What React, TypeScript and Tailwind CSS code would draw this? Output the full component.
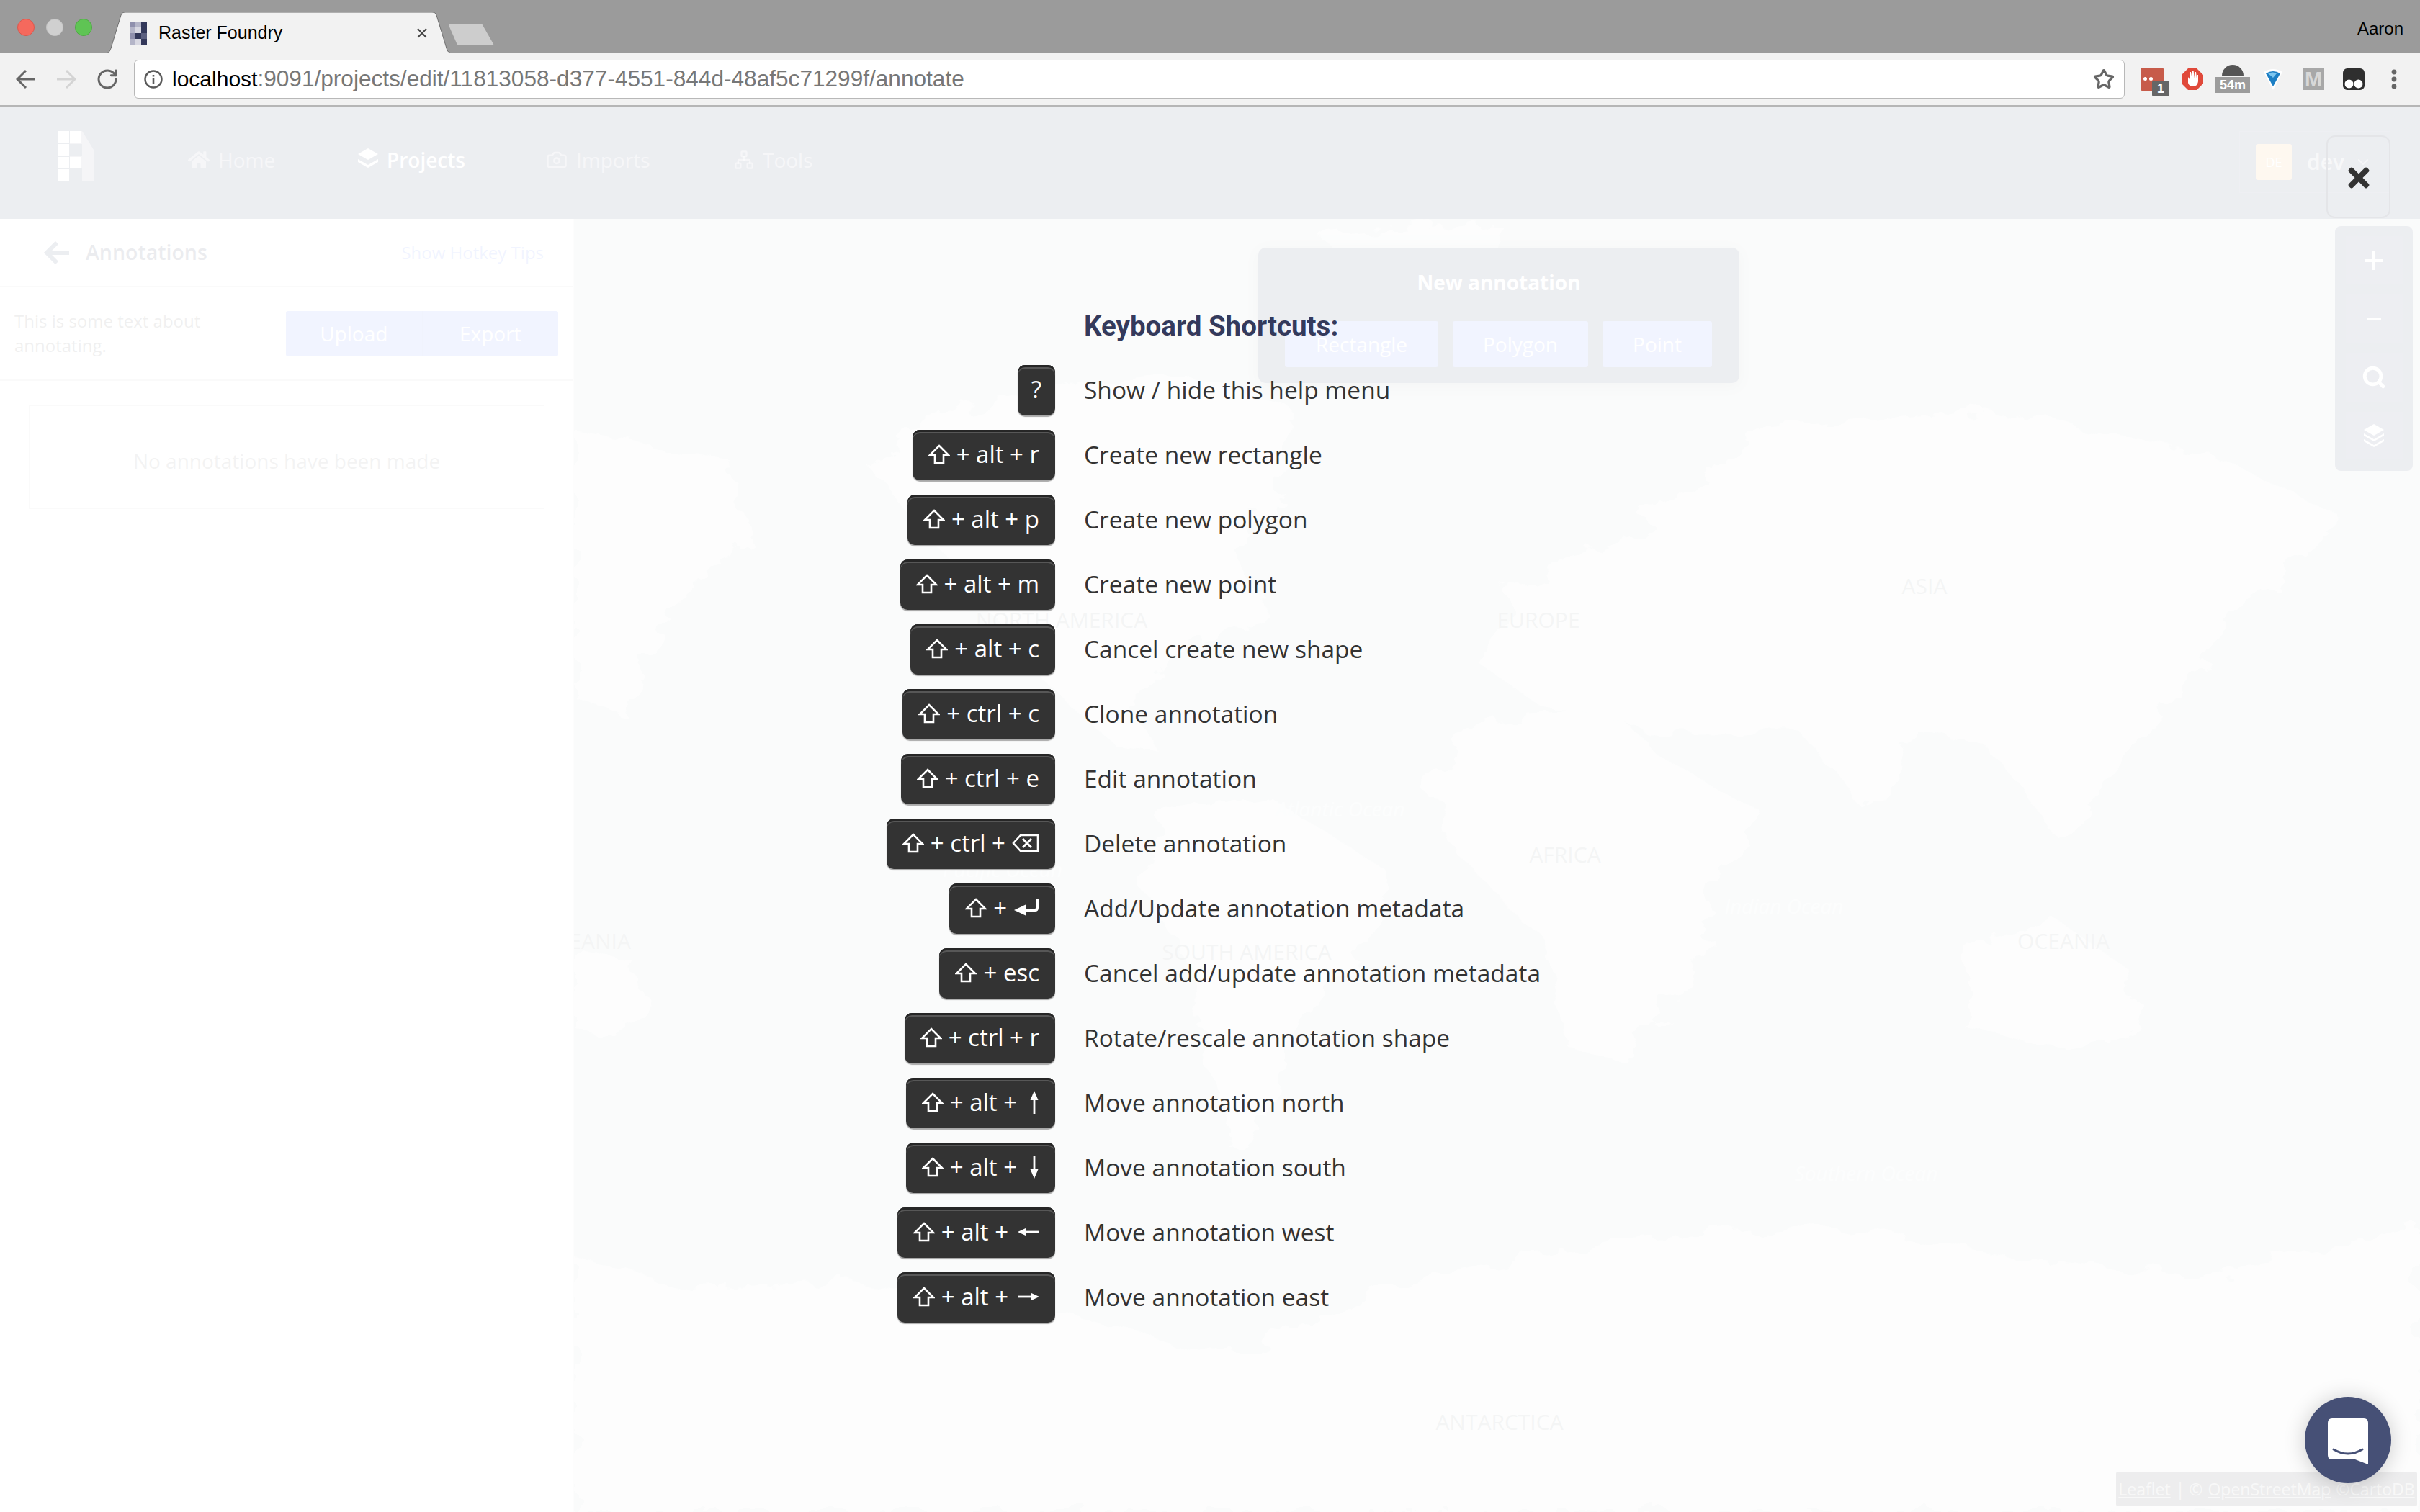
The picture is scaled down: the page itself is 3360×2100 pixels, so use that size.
import type { ReactNode } from "react"
import { FaHome, FaTimes } from "react-icons/fa"
import { Camera, ChevronDown, Network, RotateCw, Search, Star } from "lucide-react"

const openSans = "font-['Open_Sans',sans-serif]"
const chromeFont = "font-['Liberation_Sans',Arial,sans-serif]"

function ShiftIcon() {
  return (
    <svg width="30" height="28" viewBox="0 0 30 28" className="shrink-0">
      <path d="M15 2 L28 15 H21 V26 H9 V15 H2 Z" fill="none" stroke="white" strokeWidth="2.6" strokeLinejoin="miter" />
    </svg>
  )
}

function BackspaceIcon() {
  return (
    <svg width="38" height="26" viewBox="0 0 38 26" className="shrink-0">
      <path d="M12 2 H36 V24 H12 L2 13 Z" fill="none" stroke="white" strokeWidth="2.6" />
      <path d="M15 7 L27 19 M27 7 L15 19" stroke="white" strokeWidth="3" />
    </svg>
  )
}

function EnterIcon() {
  return (
    <svg width="36" height="26" viewBox="0 0 36 26" className="shrink-0">
      <path d="M33 1 V13 Q33 16 30 16 H14" fill="none" stroke="white" strokeWidth="4" />
      <path d="M1 16 L18 8 V24 Z" fill="white" />
    </svg>
  )
}

function ThinArrow({ dir }: { dir: "up" | "down" | "left" | "right" }) {
  if (dir === "up" || dir === "down") {
    return (
      <svg width="14" height="34" viewBox="0 0 14 34" className={dir === "down" ? "ml-[8px] shrink-0 rotate-180" : "ml-[8px] shrink-0"}>
        <path d="M7 12 V33" stroke="white" strokeWidth="2.8" />
        <path d="M7 1 L12.5 14 H1.5 Z" fill="white" />
      </svg>
    )
  }
  return (
    <svg width="30" height="14" viewBox="0 0 30 14" className={dir === "right" ? "ml-[4px] shrink-0 rotate-180" : "ml-[4px] shrink-0"}>
      <path d="M10 7 H29" stroke="white" strokeWidth="2.8" />
      <path d="M0 7 L12 1.5 V12.5 Z" fill="white" />
    </svg>
  )
}

function Key({ label, children, plain }: { label?: string; children?: ReactNode; plain?: boolean }) {
  return (
    <div className="flex justify-end">
      <div className={`flex h-[70px] items-center gap-[9px] whitespace-nowrap rounded-[10px] bg-[#333333] pb-[3px] text-[33px] leading-none text-white shadow-[inset_0_3px_0_#262626,inset_0_5px_0_#575757,0_2px_1px_#a9a9a9] ${plain ? "px-[19px]" : "px-[22px]"}`}>
        {!plain && <ShiftIcon />}
        {label && <span>{label}</span>}
        {children}
      </div>
    </div>
  )
}

const shortcuts: { key: ReactNode; text: string }[] = [
  { key: <Key label="?" plain />, text: "Show / hide this help menu" },
  { key: <Key label="+ alt + r" />, text: "Create new rectangle" },
  { key: <Key label="+ alt + p" />, text: "Create new polygon" },
  { key: <Key label="+ alt + m" />, text: "Create new point" },
  { key: <Key label="+ alt + c" />, text: "Cancel create new shape" },
  { key: <Key label="+ ctrl + c" />, text: "Clone annotation" },
  { key: <Key label="+ ctrl + e" />, text: "Edit annotation" },
  { key: <Key label="+ ctrl +"><BackspaceIcon /></Key>, text: "Delete annotation" },
  { key: <Key label="+"><EnterIcon /></Key>, text: "Add/Update annotation metadata" },
  { key: <Key label="+ esc" />, text: "Cancel add/update annotation metadata" },
  { key: <Key label="+ ctrl + r" />, text: "Rotate/rescale annotation shape" },
  { key: <Key label="+ alt +"><ThinArrow dir="up" /></Key>, text: "Move annotation north" },
  { key: <Key label="+ alt +"><ThinArrow dir="down" /></Key>, text: "Move annotation south" },
  { key: <Key label="+ alt +"><ThinArrow dir="left" /></Key>, text: "Move annotation west" },
  { key: <Key label="+ alt +"><ThinArrow dir="right" /></Key>, text: "Move annotation east" },
]

function Favicon() {
  const cells = [
    [0, 0, "#8f90ad"], [1, 0, "#b4b5c8"], [2, 0, "#33385a"],
    [0, 1, "#b4b5c8"], [1, 1, "#d8d8e2"], [2, 1, "#33385a"],
    [0, 2, "#8f90ad"], [1, 2, "#33385a"], [2, 2, "#5b5f7f"],
    [0, 3, "#b4b5c8"], [1, 3, "#d8d8e2"], [2, 3, "#33385a"],
  ] as const
  return (
    <svg width="24" height="32" viewBox="0 0 24 32" className="shrink-0">
      {cells.map(([x, y, c]) => (
        <rect key={`${x}-${y}`} x={x * 8} y={y * 8} width="8" height="8" fill={c} />
      ))}
    </svg>
  )
}

function BrowserChrome() {
  return (
    <div className={`${chromeFont}`}>
      <div className="flex h-[74px] items-end bg-[#9b9b9b] shadow-[inset_0_-1px_0_#6f6f6f]">
        <div className="flex h-full items-start gap-[16px] pl-[24px] pt-[26px]">
          <span className="h-[24px] w-[24px] rounded-full border border-[#d9584e] bg-[#f5695d]" />
          <span className="h-[24px] w-[24px] rounded-full border border-[#c4c4c4] bg-[#d0d0d0]" />
          <span className="h-[24px] w-[24px] rounded-full border border-[#4ea844] bg-[#5fc454]" />
        </div>
        <div className="relative ml-[17px] flex h-[57px] w-[484px] items-center pl-[35px]">
          <svg className="absolute inset-0" width="484" height="57" viewBox="0 0 484 57">
            <path d="M0 57 C6 57 8 54 9 50 L23 4 C24 1 26 0 29 0 L455 0 C458 0 460 1 461 4 L475 50 C476 54 478 57 484 57 Z" fill="#f2f2f2" stroke="#6f6f6f" strokeWidth="1" />
          </svg>
          <div className="relative flex items-center gap-[16px]">
            <Favicon />
            <span className="text-[25px] leading-none text-black">Raster Foundry</span>
          </div>
          <svg className="absolute left-[433px] top-[21px]" width="16" height="16" viewBox="0 0 16 16">
            <path d="M2 2 L14 14 M14 2 L2 14" stroke="#444" strokeWidth="2" />
          </svg>
        </div>
        <svg className="-ml-[6px] mb-[11px] shrink-0" width="64" height="30" viewBox="0 0 64 30">
          <path d="M2 0 H46 L62 28 Q63 30 60 30 H15 Q12 30 11 27 L0 2 Z" fill="#cdcdcd" />
        </svg>
        <span className="ml-auto self-start pr-[23px] pt-[26px] text-[24px] leading-[28px] text-black">Aaron</span>
      </div>
      <div className="flex h-[74px] items-center border-b-2 border-[#b6b6b6] bg-[#f2f2f2] pl-[22px]">
        <div className="flex w-[164px] shrink-0 items-center">
          <svg width="28" height="28" viewBox="0 0 28 28" className="shrink-0">
            <path d="M27 14 H3 M14 2 L2 14 L14 26" fill="none" stroke="#666" strokeWidth="3" />
          </svg>
          <svg width="28" height="28" viewBox="0 0 28 28" className="ml-[28px] shrink-0">
            <path d="M1 14 H25 M14 2 L26 14 L14 26" fill="none" stroke="#d4d4d4" strokeWidth="3" />
          </svg>
          <RotateCw className="ml-[27px] shrink-0 text-[#666]" size={32} strokeWidth={2.2} />
        </div>
        <div className="flex h-[54px] w-[2764px] shrink-0 items-center rounded-[6px] border border-[#b8b8b8] bg-white pl-[13px]">
          <svg width="26" height="26" viewBox="0 0 26 26" className="shrink-0">
            <circle cx="13" cy="13" r="11.5" fill="none" stroke="#5a5a5a" strokeWidth="2.4" />
            <path d="M13 11 V19 M13 7 V9.4" stroke="#5a5a5a" strokeWidth="2.6" />
          </svg>
          <span className="ml-[13px] whitespace-nowrap text-[30px] leading-none text-black">
            localhost<span className="text-[31.6px] text-[#777777]">:9091/projects/edit/11813058-d377-4551-844d-48af5c71299f/annotate</span>
          </span>
          <Star className="ml-auto mr-[13px] shrink-0 text-[#666]" size={30} strokeWidth={2.6} />
        </div>
        <div className="flex flex-1 items-center">
          <div className="relative ml-[22px] h-[32px] w-[32px] shrink-0 rounded-[2px] bg-[#c75b4a]">
            <div className="absolute left-[4px] top-[13px] flex gap-[3px]">
              <span className="h-[5px] w-[5px] rounded-full bg-white" />
              <span className="h-[5px] w-[5px] rounded-full bg-white" />
            </div>
            <span className="absolute left-[16px] top-[18px] flex h-[22px] w-[24px] items-center justify-center rounded-[2px] bg-[#666] text-[18px] font-bold leading-none text-white">1</span>
          </div>
          <svg width="30" height="30" viewBox="0 0 30 30" className="ml-[25px] shrink-0">
            <path d="M9 0 H21 L30 9 V21 L21 30 H9 L0 21 V9 Z" fill="#e0493a" />
            <path d="M9 12 V20 Q10 25 16 25 Q22 25 23 18 V9 L21 9 V14 L20 5 H18 V14 L16.5 3 H14.5 V14 L13 5 H11 V15 Z" fill="white" />
          </svg>
          <div className="relative ml-[17px] h-[40px] w-[48px] shrink-0">
            <div className="absolute left-[9px] top-0 h-[16px] w-[30px] rounded-t-full bg-[#555]" />
            <span className="absolute left-0 top-[17px] flex h-[22px] w-[48px] items-center justify-center bg-[#9c9c9c] text-[18px] font-bold leading-none text-white">54m</span>
          </div>
          <svg width="30" height="32" viewBox="0 0 30 32" className="ml-[17px] shrink-0">
            <path d="M2 6 Q15 -2 28 6 L15 31 Z" fill="#fff" />
            <path d="M5 8 Q15 2 25 8 L15 26 Z" fill="#1d7fc4" />
            <path d="M8 8 Q15 5 20 8 L15 14 Z" fill="#7cc6f0" />
          </svg>
          <div className="ml-[26px] flex h-[30px] w-[30px] shrink-0 items-center justify-center bg-[#a8a8a8] text-[29px] font-bold leading-none text-[#d8d8d8]">M</div>
          <svg width="30" height="30" viewBox="0 0 30 30" className="ml-[26px] shrink-0">
            <rect width="30" height="30" rx="6" fill="#2f2f2f" />
            <circle cx="8.5" cy="21.5" r="6" fill="white" />
            <circle cx="21.5" cy="21.5" r="6" fill="white" />
          </svg>
          <svg width="8" height="28" viewBox="0 0 8 28" className="ml-[37px] shrink-0">
            <circle cx="4" cy="4" r="3.4" fill="#666" />
            <circle cx="4" cy="14" r="3.4" fill="#666" />
            <circle cx="4" cy="24" r="3.4" fill="#666" />
          </svg>
        </div>
      </div>
    </div>
  )
}

function Logo() {
  return (
    <svg width="50" height="70" viewBox="0 0 50 70" className="shrink-0">
      <path d="M34 0 L50 26 V70 H34 V52 H17 V35 H34 V18 H17 V0 Z" fill="white" fillOpacity="0.45" />
      <rect width="16" height="17" fill="white" />
      <rect x="17" width="16" height="17" fill="white" />
      <rect y="18" width="16" height="17" fill="white" />
      <rect y="36" width="16" height="16" fill="white" />
      <rect x="17" y="36" width="16" height="16" fill="white" />
      <rect y="53" width="16" height="17" fill="white" />
    </svg>
  )
}

function NavItem({ icon, label, active, className }: { icon: ReactNode; label: string; active?: boolean; className?: string }) {
  return (
    <div className={`flex items-center gap-[12px] text-[28px] leading-none ${active ? "font-semibold text-white" : "text-white/50"} ${className ?? ""}`}>
      {icon}
      <span>{label}</span>
    </div>
  )
}

function TopNav() {
  return (
    <div className={`flex h-[156px] items-start bg-[#465076] ${openSans}`}>
      <div className="flex h-[120px] w-[199px] shrink-0 items-start border-r border-white/10 pl-[80px] pt-[34px]">
        <Logo />
      </div>
      <div className="flex h-[120px] w-[990px] shrink-0 items-center border-r border-white/10 pl-[62px] pt-[28px]">
        <NavItem icon={<FaHome size={30} />} label="Home" className="w-[236px]" />
        <NavItem icon={
          <svg width="28" height="32" viewBox="0 0 28 32"><path d="M14 0 L28 8 L14 16 L0 8 Z M0 15 L14 23 L28 15 V19 L14 27 L0 19 Z M0 24 L14 32 L28 24 V24 L14 32 Z" fill="white" /></svg>
        } label="Projects" active className="w-[261px]" />
        <NavItem icon={<Camera size={30} />} label="Imports" className="w-[261px]" />
        <NavItem icon={<Network size={28} />} label="Tools" />
      </div>
      <div className="ml-auto mr-[41px] mt-[34px] flex h-[86px] w-[210px] items-center border border-white/10 pl-[22px]">
        <div className="flex h-[50px] w-[50px] items-center justify-center rounded-[3px] bg-[#f5b66d] text-[18px] text-white">DE</div>
        <span className="ml-[21px] text-[30px] font-semibold leading-none text-white/60">dev</span>
        <ChevronDown className="ml-[14px] text-white/50" size={24} />
      </div>
    </div>
  )
}

function Sidebar() {
  return (
    <div className={`w-[797px] shrink-0 border-r border-[#eeeeee] bg-white ${openSans}`}>
      <div className="flex h-[95px] items-center border-b-2 border-[#cfcfcf] pl-[61px] pr-[41px]">
        <svg width="36" height="32" viewBox="0 0 36 32" className="shrink-0">
          <path d="M35 16 H6 M18 2 L4 16 L18 30" fill="none" stroke="#465076" strokeWidth="6" />
        </svg>
        <span className="ml-[22px] text-[28.5px] font-semibold leading-none text-[#3a3f5c]">Annotations</span>
        <span className="ml-auto text-[24px] leading-none text-[#738ffc]">Show Hotkey Tips</span>
      </div>
      <div className="flex h-[130px] items-center justify-between border-b-2 border-[#cfcfcf] pl-[20px] pr-[21px]">
        <p className="w-[340px] text-[24px] leading-[34px] text-[#6b6b6b]">This is some text about annotating.</p>
        <div className="flex h-[63px] w-[378px] overflow-hidden rounded-[3px] bg-[#738ffc] text-[28px] leading-none text-white">
          <span className="flex flex-1 items-center justify-center">Upload</span>
          <span className="flex flex-1 items-center justify-center border-l border-[#6883eb]">Export</span>
        </div>
      </div>
      <div className="mx-[40px] mt-[34px] flex h-[144px] items-center justify-center border border-[#c8c8c8] pt-[10px] text-[28px] leading-none text-[#888]">
        No annotations have been made
      </div>
    </div>
  )
}

const mapLabels = [
  { t: "NORTH AMERICA", c: "left-[677px] top-[557px]" },
  { t: "EUROPE", c: "left-[1339px] top-[557px]" },
  { t: "ASIA", c: "left-[1875px] top-[510px]" },
  { t: "AFRICA", c: "left-[1376px] top-[883px]" },
  { t: "SOUTH AMERICA", c: "left-[934px] top-[1018px]" },
  { t: "OCEANIA", c: "left-[2068px] top-[1003px]" },
  { t: "OCEANIA", c: "left-[15px] top-[1003px]" },
  { t: "ANTARCTICA", c: "left-[1285px] top-[1671px]" },
]

const oceanLabels = [
  { t: "Atlantic Ocean", c: "left-[1064px] top-[819px]" },
  { t: "Pacific Ocean", c: "left-[595px] top-[903px]" },
  { t: "Indian Ocean", c: "left-[1680px] top-[954px]" },
  { t: "Southern Ocean", c: "left-[1794px] top-[1325px]" },
]

function MapBase() {
  return (
    <svg className="absolute inset-0 h-full w-full" viewBox="0 0 1568 1568" preserveAspectRatio="none">
      <defs>
        <filter id="coast" x="0" y="0" width="100%" height="100%">
          <feTurbulence type="fractalNoise" baseFrequency="0.03" numOctaves="4" seed="7" />
          <feDisplacementMap in="SourceGraphic" scale="36" />
        </filter>
      </defs>
      <g fill="#e6eaea" filter="url(#coast)">
        <path d="M300 240 L420 200 L520 190 L610 230 L600 330 L560 400 L590 480 L520 520 L470 590 L500 650 L460 640 L400 560 L350 470 L300 380 L250 300 Z" />
        <path d="M640 20 L780 0 L770 90 L710 160 L670 130 Z" />
        <path d="M500 720 L590 700 L690 790 L680 880 L620 960 L590 1090 L560 1130 L540 1020 L520 900 L480 800 Z" />
        <path d="M770 610 L880 590 L920 650 L1010 720 L970 800 L950 930 L890 1020 L850 1010 L820 870 L750 770 L725 680 Z" />
        <path d="M770 540 L800 440 L900 380 L1000 260 L1200 230 L1400 290 L1500 360 L1420 470 L1370 560 L1320 640 L1270 760 L1200 640 L1140 620 L1100 720 L1040 620 L920 620 L820 590 Z" />
        <path d="M1180 880 L1260 850 L1320 910 L1330 980 L1270 1010 L1180 980 Z" />
        <path d="M0 880 L50 900 L60 960 L20 990 L0 980 Z" />
        <path d="M0 260 L130 290 L150 380 L80 470 L40 600 L0 580 Z" />
        <path d="M0 1260 L100 1300 L240 1290 L420 1330 L560 1380 L700 1290 L880 1240 L1080 1220 L1220 1260 L1400 1280 L1568 1220 V1568 H0 Z" />
      </g>
    </svg>
  )
}

function MapArea() {
  return (
    <div className={`relative flex-1 overflow-hidden bg-[#cdd7d7] ${openSans}`}>
      <MapBase />
      {mapLabels.map((l) => (
        <span key={l.t + l.c} className={`absolute -translate-x-1/2 -translate-y-1/2 whitespace-nowrap text-[30px] leading-none text-[#8f9799] ${l.c}`}>{l.t}</span>
      ))}
      {oceanLabels.map((l) => (
        <span key={l.t} className={`absolute -translate-x-1/2 -translate-y-1/2 whitespace-nowrap text-[28px] italic leading-none text-[#e4ecec] ${l.c}`}>{l.t}</span>
      ))}
      <div className="absolute left-[950px] top-[40px] h-[188px] w-[668px] rounded-[10px] bg-[#465076] shadow-[0_4px_20px_rgba(0,0,0,0.3)]">
        <div className="pt-[32px] text-center text-[28px] font-bold leading-[32px] text-white">New annotation</div>
        <div className="mt-[38px] flex gap-[20px] pl-[37px] text-[28px] leading-none text-white">
          <span className="flex h-[64px] w-[213px] items-center justify-center rounded-[3px] bg-[#738ffc]">Rectangle</span>
          <span className="flex h-[64px] w-[188px] items-center justify-center rounded-[3px] bg-[#738ffc]">Polygon</span>
          <span className="flex h-[64px] w-[152px] items-center justify-center rounded-[3px] bg-[#738ffc]">Point</span>
        </div>
      </div>
      <div className="absolute right-[10px] top-[10px] flex h-[340px] w-[108px] flex-col items-center gap-[14px] rounded-[8px] bg-[#465076] py-[14px] text-white">
        <div className="flex h-[67px] w-[79px] items-center justify-center bg-[#4d577c]"><svg width="26" height="26" viewBox="0 0 26 26"><path d="M13 0 V26 M0 13 H26" stroke="white" strokeWidth="4" /></svg></div>
        <div className="flex h-[67px] w-[79px] items-center justify-center bg-[#4d577c]"><svg width="20" height="6" viewBox="0 0 20 6"><path d="M0 3 H20" stroke="white" strokeWidth="4" /></svg></div>
        <div className="flex h-[68px] w-[79px] items-center justify-center bg-[#4d577c]"><Search size={34} strokeWidth={3.4} /></div>
        <div className="flex h-[66px] w-[79px] items-center justify-center bg-[#4d577c]">
          <svg width="30" height="32" viewBox="0 0 28 32"><path d="M14 0 L28 8 L14 16 L0 8 Z M0 13 L14 21 L28 13 V16 L14 24 L0 16 Z M0 21 L14 29 L28 21 V24 L14 32 L0 24 Z" fill="white" /></svg>
        </div>
      </div>
      <div className="absolute bottom-[8px] right-[4px] flex h-[48px] w-[418px] items-center justify-center gap-[7px] whitespace-nowrap rounded-[3px] bg-[#4b4b50] text-[23px] leading-none text-white/60">
        <span className="underline">Leaflet</span>
        <span>| ©</span>
        <span className="underline">OpenStreetMap</span>
        <span>©<span className="underline">CartoDB</span></span>
      </div>
    </div>
  )
}

function HelpOverlay() {
  return (
    <div className={`absolute inset-x-0 bottom-0 top-[148px] bg-white/90 pt-[269px] ${openSans}`}>
      <div className="grid grid-cols-[1465px_auto] items-center justify-start gap-x-[40px] gap-y-[20px]">
        <div />
        <h2 className="flex h-[70px] items-center pt-[2px] font-['Roboto',sans-serif] text-[38.5px] font-bold leading-none text-[#343a5c]">Keyboard Shortcuts:</h2>
        {shortcuts.map((s) => (
          <div key={s.text} className="contents">
            {s.key}
            <span className="pb-[1px] text-[33.5px] leading-none text-[#333333]">{s.text}</span>
          </div>
        ))}
      </div>
      <div className="absolute right-[41px] top-[40px] flex h-[115px] w-[89px] items-center justify-center rounded-[12px] border-2 border-[#e4e5e8] text-[#333333]">
        <FaTimes size={42} className="mt-[2px]" />
      </div>
    </div>
  )
}

function IntercomButton() {
  return (
    <div className="absolute bottom-[40px] right-[40px] flex h-[120px] w-[120px] items-center justify-center rounded-full bg-[#465076] shadow-[0_2px_30px_rgba(0,0,0,0.2)]">
      <svg width="56" height="64" viewBox="0 0 56 64" className="mt-[4px]">
        <path d="M6 0 H50 Q56 0 56 6 V64 L38 57 H6 Q0 57 0 51 V6 Q0 0 6 0 Z" fill="white" />
        <path d="M8 43 Q28 55 48 43" fill="none" stroke="#465076" strokeWidth="3" strokeLinecap="round" />
      </svg>
    </div>
  )
}

export default function App() {
  return (
    <div className="relative flex h-[2100px] w-[3360px] flex-col overflow-hidden bg-white">
      <BrowserChrome />
      <TopNav />
      <div className="flex flex-1">
        <Sidebar />
        <MapArea />
      </div>
      <HelpOverlay />
      <IntercomButton />
    </div>
  )
}
